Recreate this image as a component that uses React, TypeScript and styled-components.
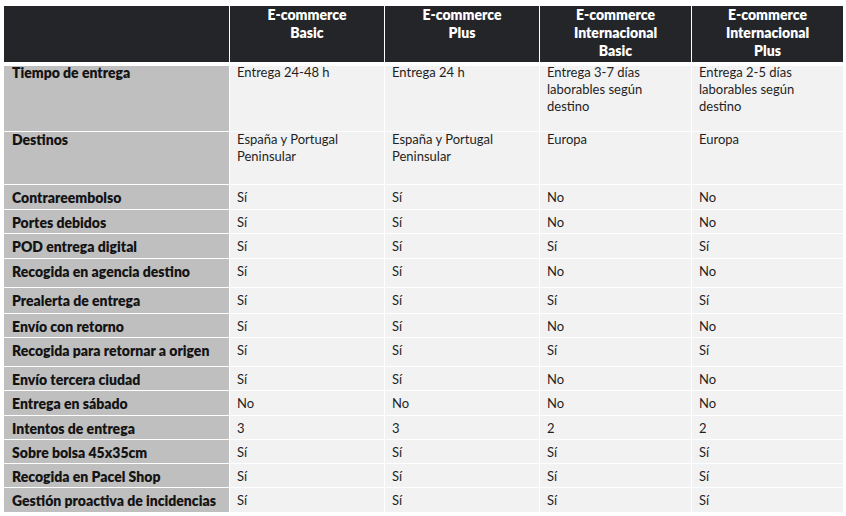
import React from 'react';
import styled, { createGlobalStyle } from 'styled-components';

type Row = {
    label: string;
    values: string[];
    height: number;
    offset: number;
};

const headers = [
    'E-commerce\nBasic',
    'E-commerce\nPlus',
    'E-commerce\nInternacional\nBasic',
    'E-commerce\nInternacional\nPlus',
];

const columnWidths = [225, 154, 154, 151, 151];

const rows: Row[] = [
    {
        label: 'Tiempo de entrega',
        values: ['Entrega 24-48 h', 'Entrega 24 h', 'Entrega 3-7 días\nlaborables según\ndestino', 'Entrega 2-5 días\nlaborables según\ndestino'],
        height: 65,
        offset: -2,
    },
    {
        label: 'Destinos',
        values: ['España y Portugal\nPeninsular', 'España y Portugal\nPeninsular', 'Europa', 'Europa'],
        height: 52,
        offset: -1,
    },
    { label: 'Contrareembolso', values: ['Sí', 'Sí', 'No', 'No'], height: 24, offset: 4 },
    { label: 'Portes debidos', values: ['Sí', 'Sí', 'No', 'No'], height: 23, offset: 4 },
    { label: 'POD entrega digital', values: ['Sí', 'Sí', 'Sí', 'Sí'], height: 24, offset: 4 },
    { label: 'Recogida en agencia destino', values: ['Sí', 'Sí', 'No', 'No'], height: 28, offset: 4 },
    { label: 'Prealerta de entrega', values: ['Sí', 'Sí', 'Sí', 'Sí'], height: 25, offset: 4 },
    { label: 'Envío con retorno', values: ['Sí', 'Sí', 'No', 'No'], height: 23, offset: 4 },
    { label: 'Recogida para retornar a origen', values: ['Sí', 'Sí', 'Sí', 'Sí'], height: 28, offset: 4 },
    { label: 'Envío tercera ciudad', values: ['Sí', 'Sí', 'No', 'No'], height: 23, offset: 4 },
    { label: 'Entrega en sábado', values: ['No', 'No', 'No', 'No'], height: 24, offset: 4 },
    { label: 'Intentos de entrega', values: ['3', '3', '2', '2'], height: 23, offset: 4 },
    { label: 'Sobre bolsa 45x35cm', values: ['Sí', 'Sí', 'Sí', 'Sí'], height: 23, offset: 4 },
    { label: 'Recogida en Pacel Shop', values: ['Sí', 'Sí', 'Sí', 'Sí'], height: 23, offset: 4 },
    { label: 'Gestión proactiva de incidencias', values: ['Sí', 'Sí', 'Sí', 'Sí'], height: 24, offset: 4 },
];

const App: React.FC = () => {
    return (
        <>
            <GlobalStyle />
            <Page>
                <Table>
                    <colgroup>
                        {columnWidths.map((w, i) => (
                            <col key={i} style={{ width: w }} />
                        ))}
                    </colgroup>
                    <thead>
                        <tr>
                            <HeadCell />
                            {headers.map(h => (
                                <HeadCell key={h}>{h}</HeadCell>
                            ))}
                        </tr>
                    </thead>
                    <tbody>
                        {rows.map(row => (
                            <BodyRow key={row.label} $h={row.height}>
                                <LabelCell>
                                    <CellText $offset={row.offset}>{row.label}</CellText>
                                </LabelCell>
                                {row.values.map((v, i) => (
                                    <ValueCell key={i}>
                                        <CellText $offset={row.offset}>{v}</CellText>
                                    </ValueCell>
                                ))}
                            </BodyRow>
                        ))}
                    </tbody>
                </Table>
            </Page>
        </>
    );
}

const GlobalStyle = createGlobalStyle`
    html, body {
        margin: 0;
        padding: 0;
        background: #fff;
    }
    body {
        font-family: Lato, "Open Sans", sans-serif;
        color: #1d1d1d;
    }
`;

const Page = styled.div`
    padding: 5px 0 0 3px;
    width: 846px;
    height: 516px;
    box-sizing: border-box;
    overflow: hidden;
`;

const Table = styled.table`
    border-collapse: separate;
    border-spacing: 1px;
    table-layout: fixed;
    width: 841px;
`;

const HeadCell = styled.th`
    height: 56px;
    padding: 0 4px;
    vertical-align: top;
    background: #242529;
    border-bottom: 3px solid #fff;
    color: #fff;
    font-size: 14px;
    font-weight: 800;
    line-height: 18px;
    text-align: center;
    white-space: pre-line;
`;

const BodyRow = styled.tr<{ $h: number }>`
    height: ${p => p.$h}px;
`;

const LabelCell = styled.td`
    padding: 0 6px 0 8px;
    vertical-align: top;
    background: #bfbfbf;
    font-size: 14px;
    font-weight: 800;
    color: #141414;
    white-space: nowrap;
`;

const ValueCell = styled.td`
    padding: 0 7px;
    vertical-align: top;
    background: #f2f2f2;
    font-size: 13px;
    color: #1f1f1f;
    white-space: pre-line;
`;

const CellText = styled.div<{ $offset: number }>`
    margin-top: ${p => p.$offset}px;
    line-height: 17px;
`;

export default App;
